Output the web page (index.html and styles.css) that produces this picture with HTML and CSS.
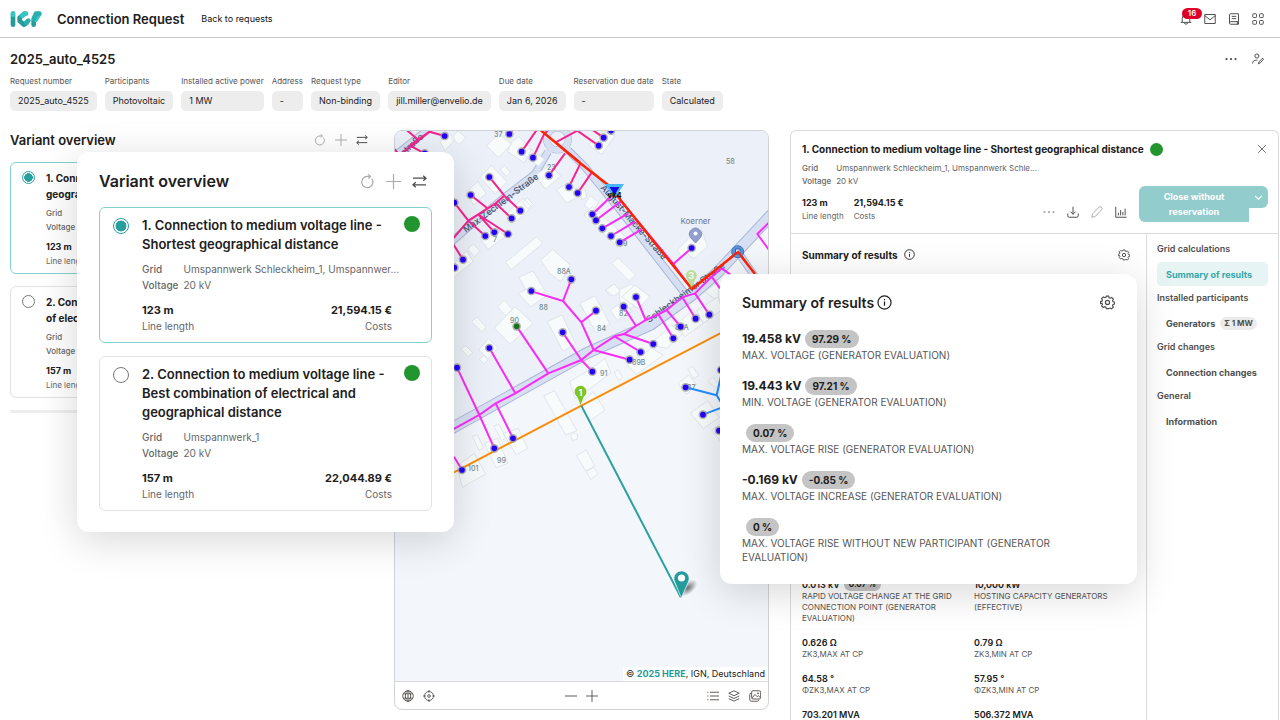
FILE: index.html
```html
<!DOCTYPE html>
<html lang="en">
<head>
<meta charset="utf-8">
<meta name="viewport" content="width=device-width, initial-scale=1">
<title>Connection Request</title>
<link rel="stylesheet" href="styles.css">
</head>
<body>
<svg class="sprite" aria-hidden="true">
  <symbol id="i-refresh" viewBox="0 0 16 16"><path d="M12.6 5A6 6 0 1 1 8 2.6h3"/><path d="M8.8 .4 11.2 2.6 8.8 4.9"/></symbol>
  <symbol id="i-plus" viewBox="0 0 16 16"><path d="M8 0v16M0 8h16"/></symbol>
  <symbol id="i-minus" viewBox="0 0 16 16"><path d="M0 8h16"/></symbol>
  <symbol id="i-swap" viewBox="0 0 16 16"><path d="M1 4.5h14M12 1.8l3 2.7-3 2.7M15 11.5H1M4 8.8l-3 2.7 3 2.7"/></symbol>
  <symbol id="i-info" viewBox="0 0 16 16"><circle cx="8" cy="8" r="7"/><path d="M8 7v4.5M8 4.3v1.2"/></symbol>
  <symbol id="i-gear" viewBox="0 0 16 16"><path d="M6.7 1h2.6l.5 1.8 1.2.5 1.7-.9 1.9 1.9-.9 1.7.5 1.2 1.8.5v2.2l-1.8.5-.5 1.2.9 1.7-1.9 1.9-1.7-.9-1.2.5L9.300 15H6.700l-.5-1.700-1.200-.5-1.700.9-1.900-1.900.9-1.700-.5-1.200L0 9.300V7.100l1.800-.5.5-1.200-.9-1.700 1.900-1.900 1.700.9 1.200-.5z" transform="translate(.4 .3) scale(.95)"/><circle cx="8" cy="8" r="2.200"/></symbol>
  <symbol id="i-dots" viewBox="0 0 16 16"><g class="solid"><circle cx="2" cy="8" r="1.500"/><circle cx="8" cy="8" r="1.500"/><circle cx="14" cy="8" r="1.500"/></g></symbol>
</svg>

<header class="topbar">
  <svg class="logo" viewBox="0 0 94 48" role="img" aria-label="IGP">
    <g fill="none" stroke-linecap="round" stroke-linejoin="round" stroke-width="14">
      <path stroke="#279a9a" d="M8 12v29"/><path stroke="#35c5c5" d="M8 7v4"/>
      <path stroke="#279a9a" d="M42 8 28 20v10l13 11 7-5"/><path stroke="#35c5c5" d="M47 8H43L35 14"/><path stroke="#2bb0b0" d="M54 29l-6 6"/>
      <path stroke="#279a9a" d="M70 41V27"/><path stroke="#35c5c5" d="M87 8 76 26"/><path stroke="#2bb0b0" d="M70 24 77 8h9"/>
    </g>
  </svg>
  <h1>Connection Request</h1>
  <a class="back" href="#">Back to requests</a>
  <nav class="top-icons" aria-label="Tools">
    <button class="icon" aria-label="Notifications"><svg viewBox="0 0 16 16"><path d="M1 12.500h14M3 12.500V7a5 5 0 0 1 10 0v5.500M5.500 13c.5 2.500 4.500 2.500 5 0"/></svg><span class="badge">16</span></button>
    <button class="icon" aria-label="Messages"><svg viewBox="0 0 16 16"><path d="M1 2h14v12H1zM1 3.500l7 5.500 7-5.500"/></svg></button>
    <button class="icon" aria-label="Handbook"><svg viewBox="0 0 16 16"><path d="M14 11.500V1H3.500Q2 1 2 2.500v11Q2 15 3.500 15H14v-3.500H3.500Q2 11.500 2 13M5 4.500h6M5 7.500h6M12.500 12v3"/></svg></button>
    <button class="icon" aria-label="Apps"><svg viewBox="0 0 16 16"><rect x="1" y="1" width="5" height="5" rx="1"/><rect x="10" y="1" width="5" height="5" rx="1"/><rect x="1" y="10" width="5" height="5" rx="1"/><rect x="10" y="10" width="5" height="5" rx="1"/></svg></button>
  </nav>
</header>

<section class="request">
  <div class="request-head">
    <h2>2025_auto_4525</h2>
    <div class="request-tools">
      <button class="icon" aria-label="More"><svg><use href="#i-dots"/></svg></button>
      <button class="icon" aria-label="Edit participants"><svg viewBox="0 0 16 16"><circle cx="6.500" cy="4" r="2.700"/><path d="M.8 14c0-3 2-4.500 5-4.500h1.500M8.500 14.500l.6-2.600 4.400-4.400q1.500-.8 2 .8l-4.600 4.900z"/></svg></button>
    </div>
  </div>
  <dl class="facts">
    <div><dt>Request number</dt><dd>2025_auto_4525</dd></div>
    <div><dt>Participants</dt><dd>Photovoltaic</dd></div>
    <div><dt>Installed active power</dt><dd>1 MW</dd></div>
    <div><dt>Address</dt><dd>-</dd></div>
    <div><dt>Request type</dt><dd>Non-binding</dd></div>
    <div><dt>Editor</dt><dd>jill.miller@envelio.de</dd></div>
    <div><dt>Due date</dt><dd>Jan 6, 2026</dd></div>
    <div><dt>Reservation due date</dt><dd>-</dd></div>
    <div><dt>State</dt><dd>Calculated</dd></div>
  </dl>
</section>

<main class="workspace">
  <section class="variants">
    <div class="variants-head">
      <h2>Variant overview</h2>
      <div class="tools">
        <button class="icon pale" aria-label="Reload"><svg><use href="#i-refresh"/></svg></button>
        <button class="icon pale" aria-label="Add"><svg><use href="#i-plus"/></svg></button>
        <button class="icon" aria-label="Compare"><svg><use href="#i-swap"/></svg></button>
      </div>
    </div>
    <label class="card selected">
      <input type="radio" name="variant" checked>
      <span class="card-body">
        <strong class="card-title">1. Connection to medium voltage line - Shortest geographical distance</strong>
        <span class="meta"><b>Grid</b><span>Umspannwerk Schleckheim_1</span><b>Voltage</b><span>20 kV</span></span>
        <span class="figures"><span><b>123 m</b><small>Line length</small></span><span><b>21,594.15 €</b><small>Costs</small></span></span>
      </span>
      <i class="status"></i>
    </label>
    <label class="card">
      <input type="radio" name="variant">
      <span class="card-body">
        <strong class="card-title">2. Connection to medium voltage line - Best combination of electrical and geographical distance</strong>
        <span class="meta"><b>Grid</b><span>Umspannwerk_1</span><b>Voltage</b><span>20 kV</span></span>
        <span class="figures"><span><b>157 m</b><small>Line length</small></span><span><b>22,044.89 €</b><small>Costs</small></span></span>
      </span>
      <i class="status"></i>
    </label>
    <div class="divider"></div>
  </section>

  <section class="map" aria-label="Grid map">
    <div class="canvas">
      <svg class="plan" viewBox="395 131 373 550" preserveAspectRatio="xMidYMid slice">
        <defs>
          <g id="n"><circle r="13" fill="#999" opacity=".75"/><circle r="8.500" fill="#2400ff"/></g>
          <radialGradient id="sh"><stop offset="0" stop-color="#000" stop-opacity=".55"/><stop offset="1" stop-color="#000" stop-opacity="0"/></radialGradient>
        </defs>
        <rect x="0" y="0" width="1280" height="720" fill="#f3f7fb"/>
        <path fill="#ecf0f8" d="M394 130h375v87L718 272 650 325 587 353 454 427 394 458z"/>
        <!-- streets -->
        <g fill="none" stroke-linejoin="round">
          <g stroke="#aab7d6">
            <path stroke-width="12" d="M394 459 454 427 587 353 650 325 692 295 718 272 775 211"/>
            <path stroke-width="8" d="M440 252 465 230 505 197 535 174 548 152"/>
            <path stroke-width="8" d="M568 150 585 167 620 210 690 300M392 158 430 128M738 252 760 284"/>
            <circle cx="557.500" cy="139" r="11" stroke-width="7"/>
          </g>
          <g stroke="#d7e0f3">
            <path stroke-width="10" d="M394 459 454 427 587 353 650 325 692 295 718 272 775 211"/>
            <path stroke-width="6" d="M440 252 465 230 505 197 535 174 549 150"/>
            <path stroke-width="6" d="M566 148 585 167 620 210 690 300M392 158 430 128M738 252 760 284"/>
            <circle cx="557.500" cy="139" r="11" stroke-width="6"/>
          </g>
        </g>
        <!-- buildings -->
        <g transform="translate(390 125) scale(.3333)" fill="#f8fbfc" stroke="#dae1e6" stroke-width="2.500">
          <path d="M347 412 440 335 458 355 364 434zM270 157 304 122 351 170 316 207zM229 200 264 170 288 205 250 240zM331 133l12-11 18 20-12 12zM366 250l35-30 25 27-55 50-24-27zM270 340l45-35 30 30-50 38zM233 373l17-16 20 22-17 15zM206 400l24-22 20 32-60 48-12-20zM387 457l42-19 38 62-44 22zM452 405l36-32 53 47-28 50-35-26zM362 55l25-20 38 38-22 40-50-34zM436 150l42-28 36 30-48 40zM500 195l30-20 50 32-50 27zM397 88l20-18 46 32-17 22zM150 50l20-30 25 22-30 36zM290 62l35-35 40 30-40 40zM397 233l15-14 18 20-15 13zM184 40l20-22 24 20-20 20z"/>
        </g>
        <g transform="translate(580 125) scale(.3333)" fill="#f8fbfc" stroke="#dae1e6" stroke-width="2.500">
          <path d="M94 415 115 399 167 450 148 468zM12 240l20-28 24 20-18 30zM12 270l25-25 105 95-25 30zM292 375l70-70 20 60-40 35-22-15-15 12zM25 60 70 20l35 12-40 56zM75 495l25-17 14 18-22 17zM117 495l37-18 36 32-38 42-32-20zM0 200l15-8 5 25-15 8zM0 540l35-24 25 20v20H10zM375 500l40-30v60z"/>
        </g>
        <g transform="translate(440 290) scale(.3333)" fill="#f8fbfc" stroke="#dae1e6" stroke-width="2.500">
          <path d="M95 95 110 81 139 112 125 126zM173 50l20-20 24 28-20 20zM163 115 225 50 279 100 211 162zM64 178l12-12 22 22-13 12zM116 180l30-35 28 30-30 32zM118 208l14-12 12 13-12 12zM322 95l44-20 40 85-36 24zM420 40l45-22 45 85-42 25zM235 10l40-20 40 30-42 30zM498 0l25-18 18 22-20 14zM510 60l40-25 25 30-42 26zM545 20l40-35 45 35-36 35zM389 275 455 235l40-30 18 44-80 60-28 16zM415 350l45-45 35 55-44 32zM311 318l32-16 68 120-34 13zM392 436l9-8 12 6-2 14-14 3zM409 497l30-17 25 48-27 15zM439 545l22-13 13 20-22 17zM560 225l75-50 35 20-80 58zM523 248l12-9 13 24-13 8zM630 165l65-60 35 25-50 45zM700 110l60-50 30 40-55 40zM770 62l65-42 10 40-55 40zM133 460l40-15 30 75-35 13zM162 408l14-5 22 40-13 9zM97 440l14-7 20 40-14 9zM190 430l45-15 28 60-34 20zM51 528l52-38 34 62-70 40zM714 280l32-25 24 28-30 30zM744 238l13-9 20 27-15 10zM751 370l52-38 35 50-48 34zM804 275l14-13 20 20-12 10zM815 420l25-18v50z"/>
        </g>
        <!-- house numbers and streets -->
        <g class="numbers">
          <text x="726" y="164">58</text><text x="557" y="274">88A</text><text x="547" y="170">23</text><text x="493" y="242">7</text><text x="494" y="137">37</text><text x="623" y="246">9</text>
          <text x="539" y="310">88</text><text x="510" y="323">90</text><text x="597" y="331">84</text><text x="619" y="316">82</text><text x="600" y="376">91</text><text x="632" y="365">89B</text><text x="497" y="463">99</text><text x="468" y="471">101</text><text x="687" y="390">87</text><text x="675" y="330">83A</text>
        </g>
        <g class="streets">
          <text transform="translate(466 233) rotate(-37)">Max-Zechlein-Straße</text>
          <text transform="translate(600 188) rotate(49)">August-Macke-Straße</text>
          <text transform="translate(649 323) rotate(-36)">Schleckheimer Straße</text>
          <text transform="translate(404 156) rotate(-43)">straße</text>
        </g>
        <!-- grid lines -->
        <g fill="none" stroke-width="6" stroke-linejoin="round">
          <g transform="translate(390 125) scale(.3333)" stroke="#f7238d">
            <path d="M50 15 85 45 40 82M164 33 118 20 60 62 104 85M118 20 30 90M13 72l12 14M190 340 235 287 317 235 343 212M193 233l42 54 51 46M242 210l50 40M298 156l45 56 48 45M317 235l48 45M313 322l-46-52 87 57M190 358l29 46M358 27l10-12M440 15 395 80M480 10 462 28 429 98M525 85 477 151M570 118 537 186M605 143 563 204M497 52 562 17 626 62M608 15 641 38M497 52 570 112"/>
          </g>
          <g transform="translate(580 125) scale(.3333)" stroke="#f82cf5">
            <path d="M95 213 37 268M122 230 48 286M145 265 67 310M165 290 93 333M185 313 119 352M100 200 280 417 335 369M280 417 335 492M567 292 532 327 567 375"/>
          </g>
          <g transform="translate(440 290) scale(.3333)" stroke="#f82cf5">
            <path d="M42 417 118 375 167 340 226 310 325 250 424 210 461 180 524 139 552 132 588 108 617 90 655 73 680 60 727 22 765 10 815-40 845-65 880-40M461 180 424 97 369 33 275 4M369 33 394-32M424 97 468 62M368 127l56 83 33 35M230 109 325 250M148 174l78 136M51 233 118 375 163 475M167 340 219 445M461 180 569 209M524 139 602 186M552 132 640 162M551 50 588 108M588 21 617 90M655 73 700 145M680 60 722 110M727 22 767 86M765 10 808 74M815-40 840-5M42 500 66 540"/>
            <path stroke="#248dff" d="M737 292 830 316 845 250M830 316 848 345M789 374 845 353"/>
            <path stroke="#fb8c0a" d="M42 547 424 347 845 128"/>
            <path stroke="#29a09f" d="M424 347 723 923"/>
          </g>
          <path stroke="#ff2200" stroke-width="2.500" d="M540.500 130 580 163 612 188 622 202 692 289 738 252 755 274"/>
        </g>
        <g transform="translate(390 125) scale(.3333)">
          <use href="#n" x="164" y="33"/><use href="#n" x="104" y="85"/><use href="#n" x="358" y="27"/><use href="#n" x="395" y="80"/><use href="#n" x="429" y="98"/><use href="#n" x="477" y="151"/><use href="#n" x="537" y="186"/><use href="#n" x="563" y="204"/><use href="#n" x="298" y="156"/><use href="#n" x="242" y="210"/><use href="#n" x="193" y="233"/><use href="#n" x="391" y="257"/><use href="#n" x="365" y="280"/><use href="#n" x="354" y="327"/><use href="#n" x="313" y="322"/><use href="#n" x="286" y="333"/><use href="#n" x="219" y="404"/><use href="#n" x="193" y="428"/><use href="#n" x="544" y="463"/><use href="#n" x="424" y="498"/>
        </g>
        <g transform="translate(580 125) scale(.3333)">
          <use href="#n" x="56" y="62"/><use href="#n" x="71" y="38"/><use href="#n" x="93" y="17"/><use href="#n" x="37" y="268"/><use href="#n" x="48" y="286"/><use href="#n" x="67" y="310"/><use href="#n" x="93" y="333"/><use href="#n" x="119" y="352"/><use href="#n" x="335" y="369"/>
        </g>
        <g transform="translate(440 290) scale(.3333)">
          <use href="#n" x="468" y="62"/><use href="#n" x="368" y="127"/><use href="#n" x="457" y="245"/><use href="#n" x="148" y="174"/><use href="#n" x="51" y="233"/><use href="#n" x="163" y="475"/><use href="#n" x="219" y="445"/><use href="#n" x="66" y="540"/><use href="#n" x="569" y="209"/><use href="#n" x="602" y="186"/><use href="#n" x="640" y="162"/><use href="#n" x="551" y="50"/><use href="#n" x="588" y="21"/><use href="#n" x="700" y="145"/><use href="#n" x="722" y="110"/><use href="#n" x="767" y="86"/><use href="#n" x="808" y="74"/><use href="#n" x="737" y="292"/><use href="#n" x="789" y="374"/><use href="#n" x="837" y="422"/><use href="#n" x="843" y="240"/>
          <circle cx="230" cy="109" r="13" fill="#999" opacity=".75"/><circle cx="230" cy="109" r="8.500" fill="#167316"/>
        </g>
        <!-- places and markers -->
        <path fill="#47b9f8" d="M605 184h19l-9.500 15z"/><path fill="#1709e6" d="M609.500 187h10l-5 8z"/>
        <text class="station" x="614.500" y="198">vk4</text>
        <text class="place" x="695.500" y="224">Koerner</text>
        <path fill="#929fcf" stroke="#7e8bbd" d="M695.500 243 690.500 237.500a6 6 0 1 1 10 0z"/><circle cx="695.500" cy="233.500" r="2" fill="#fff"/>
        <circle cx="737.700" cy="251.700" r="6" fill="#5f94dc" stroke="#3f70bd"/><path fill="#d6e5fa" stroke="#2e62b1" d="M735.500 249h4.500v5h-4.500z"/><path fill="none" stroke="#ff2200" stroke-width="2" d="M730 258 738 252 746 262"/>
        <g opacity=".6"><path fill="#9bd45c" d="M691.500 289 687.500 279.500a5.500 5.500 0 1 1 7.500 0z"/><text class="pin-text" x="691.200" y="278.500">3</text></g>
        <path fill="#7cc623" d="M580.500 405 577.500 397a6 6 0 1 1 6 0z"/><text class="pin-text" x="580.400" y="395.500">1</text>
        <ellipse cx="688" cy="588" rx="11" ry="6" fill="url(#sh)" transform="rotate(-40 688 588)"/>
        <path fill="#229b9b" stroke="#fff" stroke-width=".6" d="M681.300 598 675 582.500a7.600 7.600 0 1 1 13 0z"/><circle cx="681.500" cy="578" r="3.600" fill="#fff"/>
      </svg>
      <p class="credit">© <a href="#">2025 HERE</a>, IGN, Deutschland</p>
    </div>
    <div class="map-bar">
      <div class="tools">
        <button class="icon" aria-label="Base map"><svg viewBox="0 0 16 16"><circle cx="8" cy="8" r="7"/><ellipse cx="8" cy="8" rx="3.500" ry="7"/><path d="M1.800 5h12.400M1.800 11h12.400M8 1v14"/></svg></button>
        <button class="icon" aria-label="Centre"><svg viewBox="0 0 16 16"><circle cx="8" cy="8" r="6"/><circle cx="8" cy="8" r="1.800"/><path d="M8 0v3.500M8 12.500V16M0 8h3.500M12.500 8H16"/></svg></button>
      </div>
      <div class="tools">
        <button class="icon" aria-label="Zoom out"><svg><use href="#i-minus"/></svg></button>
        <button class="icon" aria-label="Zoom in"><svg><use href="#i-plus"/></svg></button>
      </div>
      <div class="tools">
        <button class="icon" aria-label="Legend"><svg viewBox="0 0 16 16"><path d="M4 3h12M4 8h12M4 13h12M.5 3H2M.5 8H2M.5 13H2"/></svg></button>
        <button class="icon" aria-label="Layers"><svg viewBox="0 0 16 16"><path d="M8 1l7 3.300-7 3.300-7-3.300zM1 8l7 3.300L15 8M1 11.500l7 3.300 7-3.300"/></svg></button>
        <button class="icon" aria-label="Pictures"><svg viewBox="0 0 16 16"><rect x="3.500" y="1" width="12" height="11" rx="2"/><path d="M3.500 4Q1 4 1 6v6.500Q1 15 3.500 15H11q2 0 2-2M4 10.500 8 6l3 3 1.500-1.500 3 3"/><circle cx="12" cy="4.500" r=".8"/></svg></button>
      </div>
    </div>
  </section>

  <section class="detail">
    <header class="detail-head">
      <div class="detail-title">
        <h2>1. Connection to medium voltage line - Shortest geographical distance</h2><i class="status"></i>
        <button class="icon close" aria-label="Close"><svg viewBox="0 0 16 16"><path d="M2 2l12 12M14 2 2 14"/></svg></button>
      </div>
      <div class="meta"><b>Grid</b><span>Umspannwerk Schleckheim_1, Umspannwerk Schle...</span><b>Voltage</b><span>20 kV</span></div>
      <div class="detail-row">
        <div class="figures"><span><b>123 m</b><small>Line length</small></span><span><b>21,594.15 €</b><small>Costs</small></span></div>
        <div class="tools">
          <button class="icon pale" aria-label="More"><svg><use href="#i-dots"/></svg></button>
          <button class="icon" aria-label="Download"><svg viewBox="0 0 16 16"><path d="M8 1v10M4.500 7.500 8 11l3.500-3.500M1 10v3q0 2 2 2h10q2 0 2-2v-3"/></svg></button>
          <button class="icon pale" aria-label="Edit"><svg viewBox="0 0 16 16"><path d="M1 15l1-4.500 8.500-8.700q2-1.600 3.500 0t0 3.400L5.500 14z"/></svg></button>
          <button class="icon" aria-label="Charts"><svg viewBox="0 0 16 16"><path d="M1 1v14h14.500M4.500 12.500V9M7.500 12.500V5.500M10.500 12.500V8M13.500 12.500V3.500"/></svg></button>
        </div>
        <div class="split">
          <button class="split-main">Close without reservation</button>
          <button class="split-more" aria-label="More options"><svg viewBox="0 0 16 16"><path d="M3 5.500l5 5 5-5"/></svg></button>
        </div>
      </div>
    </header>
    <div class="detail-body">
      <div class="results">
        <div class="results-head"><h3>Summary of results</h3><svg class="info"><use href="#i-info"/></svg><button class="icon gear" aria-label="Settings"><svg><use href="#i-gear"/></svg></button></div>
        <dl class="metrics">
          <div><dd>0.013 kV <em>0.07 %</em></dd><dt>RAPID VOLTAGE CHANGE AT THE GRID CONNECTION POINT (GENERATOR EVALUATION)</dt></div>
          <div><dd>10,000 kW</dd><dt>HOSTING CAPACITY GENERATORS (EFFECTIVE)</dt></div>
          <div><dd>0.626 Ω</dd><dt>ZK3,MAX AT CP</dt></div>
          <div><dd>0.79 Ω</dd><dt>ZK3,MIN AT CP</dt></div>
          <div><dd>64.58 °</dd><dt>ΦZK3,MAX AT CP</dt></div>
          <div><dd>57.95 °</dd><dt>ΦZK3,MIN AT CP</dt></div>
          <div><dd>703.201 MVA</dd></div>
          <div><dd>506.372 MVA</dd></div>
        </dl>
      </div>
      <nav class="sections" aria-label="Sections">
        <h4>Grid calculations</h4>
        <a class="current" href="#">Summary of results</a>
        <h4>Installed participants</h4>
        <a href="#">Generators <em>Σ 1 MW</em></a>
        <h4>Grid changes</h4>
        <a href="#">Connection changes</a>
        <h4>General</h4>
        <a href="#">Information</a>
      </nav>
    </div>
  </section>
</main>

<aside class="popup popup-variants large">
  <div class="variants-head">
    <h2>Variant overview</h2>
    <div class="tools">
      <button class="icon pale" aria-label="Reload"><svg><use href="#i-refresh"/></svg></button>
      <button class="icon pale" aria-label="Add"><svg><use href="#i-plus"/></svg></button>
      <button class="icon" aria-label="Compare"><svg><use href="#i-swap"/></svg></button>
    </div>
  </div>
  <label class="card selected">
    <input type="radio" name="variant-large" checked>
    <span class="card-body">
      <strong class="card-title">1. Connection to medium voltage line - Shortest geographical distance</strong>
      <span class="meta"><b>Grid</b><span>Umspannwerk Schleckheim_1, Umspannwer...</span><b>Voltage</b><span>20 kV</span></span>
      <span class="figures"><span><b>123 m</b><small>Line length</small></span><span><b>21,594.15 €</b><small>Costs</small></span></span>
    </span>
    <i class="status"></i>
  </label>
  <label class="card">
    <input type="radio" name="variant-large">
    <span class="card-body">
      <strong class="card-title">2. Connection to medium voltage line - Best combination of electrical and geographical distance</strong>
      <span class="meta"><b>Grid</b><span>Umspannwerk_1</span><b>Voltage</b><span>20 kV</span></span>
      <span class="figures"><span><b>157 m</b><small>Line length</small></span><span><b>22,044.89 €</b><small>Costs</small></span></span>
    </span>
    <i class="status"></i>
  </label>
</aside>

<aside class="popup popup-results">
  <div class="results-head"><h3>Summary of results</h3><svg class="info"><use href="#i-info"/></svg><button class="icon gear" aria-label="Settings"><svg><use href="#i-gear"/></svg></button></div>
  <dl class="metrics">
    <div><dd>19.458 kV <em>97.29 %</em></dd><dt>MAX. VOLTAGE (GENERATOR EVALUATION)</dt></div>
    <div><dd>19.443 kV <em>97.21 %</em></dd><dt>MIN. VOLTAGE (GENERATOR EVALUATION)</dt></div>
    <div><dd><em>0.07 %</em></dd><dt>MAX. VOLTAGE RISE (GENERATOR EVALUATION)</dt></div>
    <div><dd>-0.169 kV <em>-0.85 %</em></dd><dt>MAX. VOLTAGE INCREASE (GENERATOR EVALUATION)</dt></div>
    <div><dd><em>0 %</em></dd><dt>MAX. VOLTAGE RISE WITHOUT NEW PARTICIPANT (GENERATOR EVALUATION)</dt></div>
  </dl>
</aside>
</body>
</html>
```
FILE: styles.css
```css
* { box-sizing: border-box; }
body {
  margin: 0;
  height: 100vh;
  overflow: hidden;
  display: flex;
  flex-direction: column;
  font-family: Inter, "Liberation Sans", sans-serif;
  font-size: 10px;
  color: #202020;
  background: #fff;
}
h1, h2, h3, h4, p, dl, dd, dt { margin: 0; }
h1, h2, h3 { font-weight: 600; }
a { color: inherit; text-decoration: none; }
button { font: inherit; border: 0; padding: 0; background: none; color: inherit; }
em, i { font-style: normal; }
.sprite { display: none; }

.icon { position: relative; display: inline-flex; flex: none; width: 12px; height: 12px; color: #4d4d4d; }
.icon svg, .info { display: block; width: 100%; height: 100%; fill: none; stroke: currentColor; stroke-width: 1.3; }
.solid { fill: currentColor; stroke: none; }
.pale { color: #ababab; }
.tools { display: flex; align-items: center; gap: 10px; }

.topbar { display: flex; align-items: center; height: 38px; padding: 0 16px 0 10px; border-bottom: 1px solid #c9c9c9; flex: none; }
.logo { width: 32px; height: 16px; }
.topbar h1 { margin-left: 15px; font-size: 13px; }
.back { margin-left: 17px; font-size: 9px; color: #111; }
.top-icons { display: flex; gap: 12px; margin-left: auto; }
.badge { position: absolute; left: 2px; top: -5px; width: 20px; height: 11px; border-radius: 6px; background: #dc0028; color: #fff; font-size: 8px; line-height: 11px; font-weight: 600; text-align: center; }

.request { padding: 12px 16px 0 10px; flex: none; }
.request-head { display: flex; align-items: center; justify-content: space-between; height: 18px; }
.request-head h2 { font-size: 13px; }
.request-tools { display: flex; gap: 15px; }
.facts { display: flex; gap: 8px; margin-top: 8px; }
.facts dt { font-size: 8px; line-height: 10px; color: #555; }
.facts dd { margin-top: 5px; padding: 0 8px; height: 20px; line-height: 20px; border-radius: 5px; background: #ededed; font-size: 9px; white-space: nowrap; }

.workspace { flex: 1; min-height: 0; margin-top: 19px; padding: 0 1px 0 10px; display: grid; grid-template-columns: 363fr 375fr 489fr; gap: 21px; }
.variants { padding-right: 5px; }
.variants-head { display: flex; align-items: center; justify-content: space-between; height: 20px; margin-bottom: 12px; }
.variants-head h2 { font-size: 13px; }
.variants .tools { gap: 9px; }

.card { display: flex; border: 1px solid #e2e2e2; border-radius: 6px; padding: 7px 8px 5px 11px; margin-bottom: 12px; }
.selected { border-color: #83d0d0; }
.card input { appearance: none; flex: none; width: 13px; height: 13px; margin: 1px 11px 0 0; border: 1px solid #777; border-radius: 50%; background: #fff; }
.card input:checked { border: 1px solid #2a9d9d; background: radial-gradient(circle, #2a9d9d 52%, #fff 58%); }
.card-body { flex: 1; min-width: 0; display: block; }
.card-title { display: block; font-size: 10px; line-height: 16px; font-weight: 700; }
.status { flex: none; width: 13px; height: 13px; margin-left: 12px; border-radius: 50%; background: #22952f; }
.meta { display: grid; grid-template-columns: auto 1fr; column-gap: 6px; margin-top: 4px; font-size: 8px; line-height: 14px; color: #666; white-space: nowrap; }
.meta b { font-weight: 500; }
.figures { display: flex; justify-content: space-between; margin-top: 6px; }
.figures b { display: block; font-size: 9px; line-height: 14px; font-weight: 700; }
.figures small { display: block; font-size: 8px; line-height: 14px; color: #666; }
.divider { height: 3px; background: #eee; }

.map { display: flex; flex-direction: column; min-width: 0; min-height: 0; margin-bottom: 10px; border: 1px solid #cfd3d6; border-radius: 8px; overflow: hidden; }
.canvas { position: relative; flex: 1; min-height: 0; }
.plan { display: block; width: 100%; height: 100%; }
.numbers { font-size: 7px; fill: #748a90; font-weight: 500; }
.streets { font-size: 9px; fill: #46536e; font-weight: 500; }
.station { font-size: 8px; font-weight: 700; text-anchor: middle; fill: #111; }
.place { font-size: 8px; fill: #69749a; text-anchor: middle; }
.pin-text { font-size: 9px; font-weight: 700; text-anchor: middle; fill: #fff; }
.credit { position: absolute; right: 0; bottom: 0; padding: 0 3px; background: #fff; font: 9px/14px Inter, "Liberation Sans", sans-serif; }
.credit a { color: #1d9b9b; font-weight: 700; }
.map-bar { display: grid; grid-template-columns: 1fr auto 1fr; align-items: center; height: 28px; padding: 0 7px; border-top: 1px solid #d9d9d9; }
.map-bar .tools { gap: 9px; }
.map-bar .tools:last-child { justify-content: flex-end; }
.map-bar .icon { color: #5f5a57; }

.detail { display: flex; flex-direction: column; min-width: 0; min-height: 0; border: 1px solid #d9dbdc; border-bottom: 0; border-radius: 6px 6px 0 0; overflow: hidden; }
.detail-head { flex: none; height: 103px; padding: 10px 10px 0 11px; border-bottom: 1px solid #dcdcdc; }
.detail-title { display: flex; align-items: center; height: 16px; }
.detail-title h2 { font-size: 10px; font-weight: 700; white-space: nowrap; }
.detail-title .status { margin-left: 6px; }
.detail .meta { margin-top: 5px; column-gap: 5px; line-height: 13px; }
.close { margin: 0 1px 0 auto; width: 10px; height: 10px; }
.detail-row { display: flex; align-items: flex-start; }
.detail-row .figures { margin-top: 8px; gap: 10px; flex: 1; justify-content: flex-start; }
.detail-row .figures small { line-height: 12px; }
.detail-row .tools { margin: 18px 12px 0 0; gap: 12px; }
.split { display: flex; align-items: flex-start; margin-top: -2px; }
.split-main { width: 110px; padding: 3px 20px; background: #93cccd; color: #fff; border-radius: 6px 0 0 6px; font-size: 9px; line-height: 15px; font-weight: 700; }
.split-more { width: 19px; height: 22px; padding: 5px 4px; background: #93cccd; border-radius: 0 6px 6px 0; color: #fff; }
.split-more svg { display: block; fill: none; stroke: currentColor; stroke-width: 1.5; }

.detail-body { flex: 1; min-height: 0; display: grid; grid-template-columns: 1fr 132px; }
.results { min-width: 0; padding: 12px 16px 0 11px; }
.results-head { display: flex; align-items: center; height: 17px; }
.results-head h3 { font-size: 10px; font-weight: 700; }
.info { width: 11px; height: 11px; margin-left: 6px; }
.gear { margin-left: auto; }
.metrics dd { display: flex; align-items: center; font-size: 9px; line-height: 13px; font-weight: 600; }
.metrics dt { font-size: 8px; line-height: 11px; color: #555; }
.metrics em { padding: 0 5px; margin-left: 4px; border-radius: 9px; background: #c4c4c4; font-size: 8px; font-weight: 700; }
.results .metrics { display: grid; grid-template-columns: 1fr 1fr; column-gap: 16px; row-gap: 12px; padding-top: 315px; }

.sections { border-left: 1px solid #dcdcdc; padding: 5px 10px; color: #4f4f4f; font-size: 9px; }
.sections h4 { font-size: 9px; font-weight: 600; line-height: 20px; }
.sections a { display: flex; align-items: center; gap: 5px; height: 24px; margin: 3px 0 2px; padding-left: 9px; font-weight: 700; border-radius: 5px; }
.sections .current { background: #e6f4f4; color: #35a8a8; }
.sections em { padding: 0 4px; font-size: 8px; line-height: 13px; border-radius: 7px; background: #ebebeb; }

.popup { position: absolute; background: #fff; border-radius: 12px; box-shadow: 0 8px 40px rgba(0, 0, 0, .16); }
.popup-variants { left: 77px; top: 152px; width: 377px; padding: 19px 22px 8px; }
.large .variants-head { margin-bottom: 16px; padding-right: 5px; }
.large .variants-head h2 { font-size: 16px; }
.large .tools { gap: 11px; }
.large .icon { width: 15px; height: 15px; }
.large .card { padding: 8px 11px 8px 13px; margin-bottom: 13px; }
.large .card input { width: 16px; height: 16px; margin: 2px 13px 0 0; }
.large .card-title { font-size: 13px; line-height: 19px; font-weight: 600; }
.large .status { width: 16px; height: 16px; }
.large .meta { column-gap: 5px; margin-top: 7px; font-size: 10px; line-height: 16px; }
.large .figures { margin-top: 9px; }
.large .figures b { font-size: 11px; line-height: 16px; }
.large .figures small { font-size: 10px; line-height: 16px; }
.large .figures span:last-child { text-align: right; }
.popup-results { left: 720px; top: 274px; width: 417px; padding: 20px 22px 20px; }
.popup-results .results-head h3 { font-size: 14px; font-weight: 600; }
.popup-results .info { width: 15px; height: 15px; margin-left: 3px; }
.popup-results .gear { width: 15px; height: 15px; }
.popup-results .metrics { display: grid; gap: 15px; margin-top: 19px; }
.popup-results dd { font-size: 12px; line-height: 18px; font-weight: 700; }
.popup-results dt { font-size: 10px; line-height: 14px; }
.popup-results em { padding: 0 7px; font-size: 10px; }
```
